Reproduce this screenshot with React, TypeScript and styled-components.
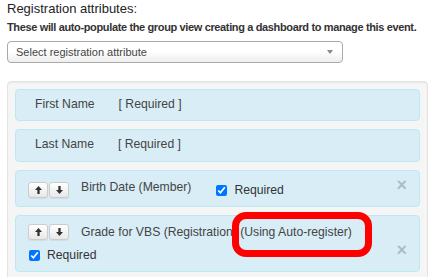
import React from 'react';
import styled, { createGlobalStyle } from 'styled-components';

const Global = createGlobalStyle`
  html, body { margin: 0; padding: 0; overflow: hidden; background: #fff; }
  body { font-family: "Liberation Sans", Arial, sans-serif; }
`;

const Page = styled.div`
  box-sizing: border-box;
  width: 435px;
  padding: 0 7px;
`;

const Title = styled.div`
  font-size: 13px;
  line-height: 18.6px;
  color: #222;
`;

const Subtitle = styled.div`
  font-size: 11px;
  font-weight: bold;
  line-height: 16px;
  letter-spacing: -0.36px;
  color: #333;
  white-space: nowrap;
`;

const Select = styled.div`
  box-sizing: border-box;
  margin-top: 6px;
  width: 336px;
  height: 22px;
  padding: 0 9px 0 8px;
  display: flex;
  align-items: center;
  justify-content: space-between;
  border: 1px solid #aaa;
  border-radius: 4px;
  background: linear-gradient(to top, #eee 0%, #fff 55%);
  font-size: 11px;
  color: #444;
`;

const Caret = styled.span`
  width: 0;
  height: 0;
  border-left: 3px solid transparent;
  border-right: 3px solid transparent;
  border-top: 4px solid #888;
`;

const Well = styled.div`
  margin-top: 18px;
  padding: 7px 7px 20px;
  border: 1px solid #e3e3e3;
  border-radius: 4px;
  background: #f5f5f5;
  box-shadow: inset 0 1px 1px rgba(0, 0, 0, 0.05);
  display: flex;
  flex-direction: column;
  gap: 8px;
`;

const ItemBase = styled.div`
  position: relative;
  border: 1px solid #bce8f1;
  border-radius: 4px;
  background: #d9edf7;
  font-size: 12.2px;
  line-height: 17px;
  color: #444;
`;

const FixedField = styled(ItemBase)`
  display: flex;
  gap: 24px;
  padding: 6px 11px 7.5px 19px;
`;

const AttrItem = styled(ItemBase)`
  display: flex;
  flex-wrap: wrap;
  align-items: flex-start;
  column-gap: 12px;
  row-gap: 3px;
  padding: 8px 11px 7px 12px;
`;

const BtnGroup = styled.div<{ $offset: number }>`
  display: flex;
  gap: 1px;
  margin-top: ${(p) => p.$offset}px;
`;

const MoveBtn = styled.button`
  box-sizing: border-box;
  width: 20px;
  height: 16px;
  padding: 0;
  display: flex;
  align-items: center;
  justify-content: center;
  border: 1px solid #ccc;
  border-radius: 3px;
  background: linear-gradient(to bottom, #fff 0%, #e8e8e8 100%);
  box-shadow: 0 1px 1px rgba(0, 0, 0, 0.06);
  color: #333;
  cursor: pointer;
`;

const AttrName = styled.span`
  margin-right: 12px;
  white-space: nowrap;
`;

const Check = styled.label`
  flex: 1 0 auto;
  display: flex;
  align-items: center;
  margin-top: 3px;
  color: #333;
  input {
    width: 11px;
    height: 11px;
    margin: 0 7px 0 1px;
  }
`;

const Close = styled.span`
  margin-left: auto;
  margin-right: 1px;
  align-self: flex-start;
  margin-top: -5px;
  font-size: 18px;
  font-weight: bold;
  line-height: 17px;
  color: #000;
  opacity: 0.2;
`;

const Highlight = styled.div`
  position: absolute;
  left: 216px;
  top: -4px;
  width: 140px;
  height: 45px;
  box-sizing: border-box;
  border: 7px solid #f00;
  border-radius: 14px;
  pointer-events: none;
  z-index: 1;
`;

const Arrow = ({ down }: { down?: boolean }) => (
  <svg width="7" height="8" viewBox="0 0 8 9" style={down ? { transform: 'rotate(180deg)' } : undefined}>
    <path d="M4 0 L8 4.6 H5.3 V9 H2.7 V4.6 H0 Z" fill="#333" />
  </svg>
);

const Movers = ({ offset }: { offset: number }) => (
  <BtnGroup $offset={offset}>
    <MoveBtn type="button"><Arrow /></MoveBtn>
    <MoveBtn type="button"><Arrow down /></MoveBtn>
  </BtnGroup>
);

const RequiredCheck = () => (
  <Check>
    <input type="checkbox" checked readOnly />
    Required
    <Close>×</Close>
  </Check>
);

export default function App() {
  return (
    <>
      <Global />
      <Page>
        <Title>Registration attributes:</Title>
        <Subtitle>These will auto-populate the group view creating a dashboard to manage this event.</Subtitle>
        <Select>
          <span>Select registration attribute</span>
          <Caret />
        </Select>
        <Well>
          <FixedField>
            <span>First Name</span>
            <span>[ Required ]</span>
          </FixedField>
          <FixedField>
            <span>Last Name</span>
            <span>[ Required ]</span>
          </FixedField>
          <AttrItem>
            <Movers offset={3} />
            <AttrName>Birth Date (Member)</AttrName>
            <RequiredCheck />
          </AttrItem>
          <AttrItem>
            <Movers offset={0} />
            <AttrName>Grade for VBS (Registration) (Using Auto-register)</AttrName>
            <RequiredCheck />
            <Highlight />
          </AttrItem>
        </Well>
      </Page>
    </>
  );
}
